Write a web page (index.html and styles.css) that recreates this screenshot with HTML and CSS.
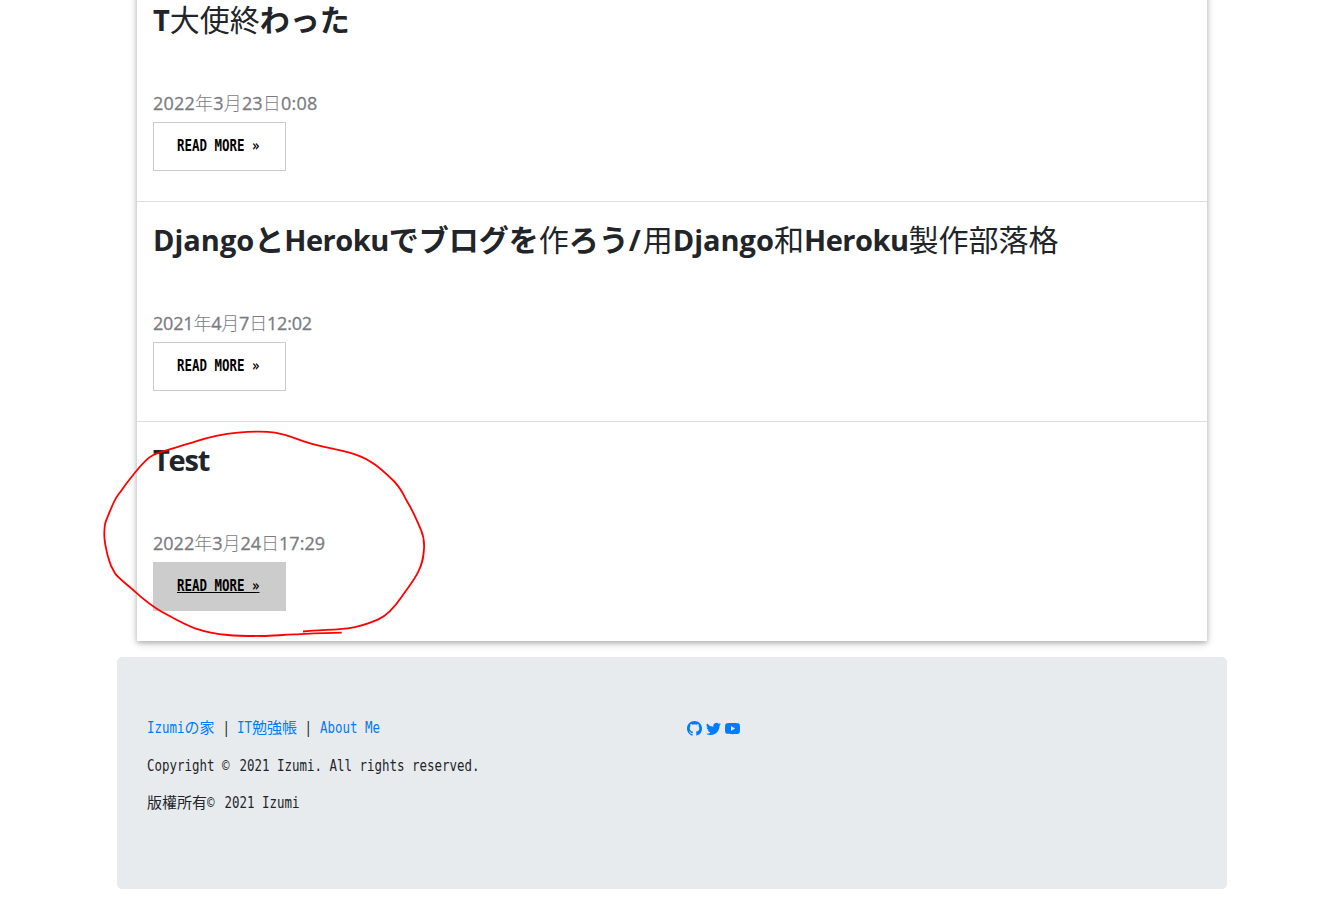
FILE: index.html
```html
<!DOCTYPE html>
<html lang="ja">
<head>
<meta charset="utf-8">
<title>Izumiの家</title>
<link rel="stylesheet" href="styles.css">
</head>
<body>
<main class="posts">
  <article class="post">
    <h2 class="title">T<span class="han">大使終</span><span class="kana">わった</span></h2>
    <h5 class="date loose">2022<span class="han">年</span>3<span class="han">月</span>23<span class="han">日</span>0:08</h5>
    <a class="more"><span class="mono">READ MORE »</span></a>
  </article>
  <article class="post">
    <h2 class="title"><span class="django">Django</span><span class="kana">と</span><span class="heroku">Heroku</span><span class="kana">でブログを</span><span class="han">作</span><span class="kana">ろう</span><span class="slash">/</span><span class="han">用</span><span class="django">Django</span><span class="han">和</span><span class="heroku">Heroku</span><span class="han">製作部落格</span></h2>
    <h5 class="date tight">2021<span class="han">年</span>4<span class="han">月</span>7<span class="han">日</span>12:02</h5>
    <a class="more"><span class="mono">READ MORE »</span></a>
  </article>
  <article class="post">
    <h2 class="title test">Test</h2>
    <h5 class="date">2022<span class="han">年</span>3<span class="han">月</span>24<span class="han">日</span>17:29</h5>
    <a class="more active"><span class="mono">READ MORE »</span></a>
  </article>
</main>
<footer class="footer">
  <div class="col">
    <p><a><span class="mono c5">Izumi</span>の家</a><span class="mono c3"> | </span><a><span class="mono c2">IT</span>勉強帳</a><span class="mono c3"> | </span><a><span class="mono">About Me</span></a></p>
    <p><span class="mono">Copyright <span class="copy">©</span> 2021 Izumi. All rights reserved.</span></p>
    <p>版權所有<span class="mono"><span class="copy">©</span> 2021 Izumi</span></p>
  </div>
  <div class="col social">
    <svg viewBox="0 0 16 16"><path d="M8 0C3.58 0 0 3.58 0 8c0 3.54 2.29 6.53 5.47 7.59.4.07.55-.17.55-.38 0-.19-.01-.82-.01-1.49-2.01.37-2.53-.49-2.69-.94-.09-.23-.48-.94-.82-1.13-.28-.15-.68-.52-.01-.53.63-.01 1.08.58 1.23.82.72 1.21 1.87.87 2.33.66.07-.52.28-.87.51-1.07-1.78-.2-3.64-.89-3.64-3.95 0-.87.31-1.59.82-2.15-.08-.2-.36-1.02.08-2.12 0 0 .67-.21 2.2.82.64-.18 1.32-.27 2-.27s1.36.09 2 .27c1.53-1.04 2.2-.82 2.2-.82.44 1.1.16 1.92.08 2.12.51.56.82 1.27.82 2.15 0 3.07-1.87 3.75-3.65 3.95.29.25.54.73.54 1.48 0 1.07-.01 1.93-.01 2.2 0 .21.15.46.55.38A8.01 8.01 0 0 0 16 8c0-4.42-3.58-8-8-8z"/></svg>
    <svg viewBox="0 0 16 16"><path d="M5.03 15c6.04 0 9.34-5 9.34-9.33v-.43A6.7 6.7 0 0 0 16 3.54a6.6 6.6 0 0 1-1.89.52 3.3 3.3 0 0 0 1.45-1.82 6.5 6.5 0 0 1-2.09.79A3.29 3.29 0 0 0 7.88 6.03 9.32 9.32 0 0 1 1.11 2.6a3.29 3.29 0 0 0 1.02 4.38A3.3 3.3 0 0 1 .64 6.57v.05a3.29 3.29 0 0 0 2.63 3.22 3.2 3.2 0 0 1-1.48.05 3.29 3.29 0 0 0 3.07 2.28A6.6 6.6 0 0 1 0 13.53 9.3 9.3 0 0 0 5.03 15z"/></svg>
    <svg viewBox="0 0 16 16"><path fill-rule="evenodd" d="M8 2c-2 0-5.2.05-6.2.32A2 2 0 0 0 .3 3.7C.07 4.8 0 6.5 0 8s.07 3.2.3 4.3a2 2 0 0 0 1.5 1.38C2.8 13.95 6 14 8 14s5.2-.05 6.2-.32a2 2 0 0 0 1.5-1.38c.23-1.1.3-2.8.3-4.3s-.07-3.2-.3-4.3a2 2 0 0 0-1.5-1.38C13.200 2.05 10 2 8 2zM6.400 5.3 10.800 8l-4.400 2.700z"/></svg>
  </div>
</footer>
<svg class="scribble" viewBox="0 0 340 220"><path d="M241.700 212.700C226 213 210 213.700 195 214.300S173 216 161.700 216S139 216 128 215S106 212 95 208.300S73 198 61.700 191.700S43 179 35 171.700S18 158 15 153.300S10 145 8 136.700S4 122 4.300 113S5 103 7.700 96.700S14 80 18 75S24 66 31.700 56.700S45 39 53.300 35S82 26 95 21.700S124 14 138 12.700S164 11 175 12.700S194 18 208 22.700S239 29 255 34.300S281 49 291.700 59S302 73 308 83S318 103 321 110S324.500 121 324 128.700S323 142 318.300 151.700S309 166 301.700 176.700S286 196 278.300 199.300S258 207 248 208.300S219 210 203 211.500"/></svg>
</body>
</html>
```
FILE: styles.css
```css
* { box-sizing: border-box; }
html { height: 897px; overflow: hidden; }
body {
  position: relative;
  height: 897px;
  margin: 0;
  overflow: hidden;
  display: flow-root;
  background: #fff;
  color: #212529;
  font-family: "Open Sans", "Noto Sans CJK JP", sans-serif;
}
.posts {
  width: 1070px;
  height: 659px;
  margin: -18px 0 0 137px;
  background: #fff;
  box-shadow: 0 2px 5px rgba(0,0,0,.25), 0 2px 10px rgba(0,0,0,.12);
}
.post {
  height: 220px;
  padding: 18px 16px 0;
  border-bottom: 1px solid #ddd;
  white-space: nowrap;
}
.post:last-child { height: 219px; border-bottom: 0; }
.title {
  height: 36px;
  margin: 0 0 53px;
  font-size: 29px;
  line-height: 36px;
  font-weight: 700;
}
.title .han, .title .kana { font-size: 30px; font-family: "Noto Sans CJK JP", sans-serif; }
.title .han { font-weight: 400; }
.post .test { padding-top: 2px; letter-spacing: -1.2px; }
.django { letter-spacing: 0; }
.heroku { letter-spacing: -.5px; }
.slash { padding-right: 2px; }
.date {
  height: 26px;
  margin: 0 0 7px;
  font-size: 18px;
  line-height: 26px;
  font-weight: 500;
  color: #7a7c7f;
  -webkit-text-stroke: .3px #7a7c7f;
}
.loose { letter-spacing: .2px; }
.tight { letter-spacing: -.2px; }
.date .han {
  font-family: "Noto Sans CJK JP", sans-serif;
  font-weight: 300;
  -webkit-text-stroke: 0;
}
.more {
  display: block;
  width: 133px;
  height: 49px;
  padding: 0 0 0 23px;
  border: 1px solid #ccc;
  line-height: 44px;
  color: #000;
  font-weight: 700;
}
.active { background: #ccc; }
.active .mono { text-decoration: underline; }
.mono {
  display: inline-block;
  font-family: "DejaVu Sans Mono", monospace;
  font-size: 15px;
  white-space: pre;
  transform: scaleX(.8305);
  transform-origin: 0 50%;
}
.copy { padding-right: 3px; }
.c2 { width: 15px; }
.c3 { width: 22.5px; }
.c5 { width: 37.5px; }
.footer {
  display: flex;
  width: 1110px;
  height: 232px;
  margin: 16px 0 0 117px;
  padding: 59px 30px;
  border-radius: 5px;
  background: #e8ebee;
  font: 15px/22.5px "Noto Sans CJK JP", sans-serif;
}
.col { flex: none; width: 540px; white-space: nowrap; }
.col p { height: 22.5px; margin: 0 0 15px; }
.col + .col { width: 510px; }
.footer a { color: #007bff; }
.social { display: flex; gap: 4px; padding-top: 5px; }
.social svg { width: 15px; height: 15px; fill: #007bff; }
.scribble {
  position: absolute;
  left: 100px;
  top: 420px;
  width: 340px;
  height: 220px;
  fill: none;
  stroke: #f00;
  stroke-width: 1.8;
}
```
